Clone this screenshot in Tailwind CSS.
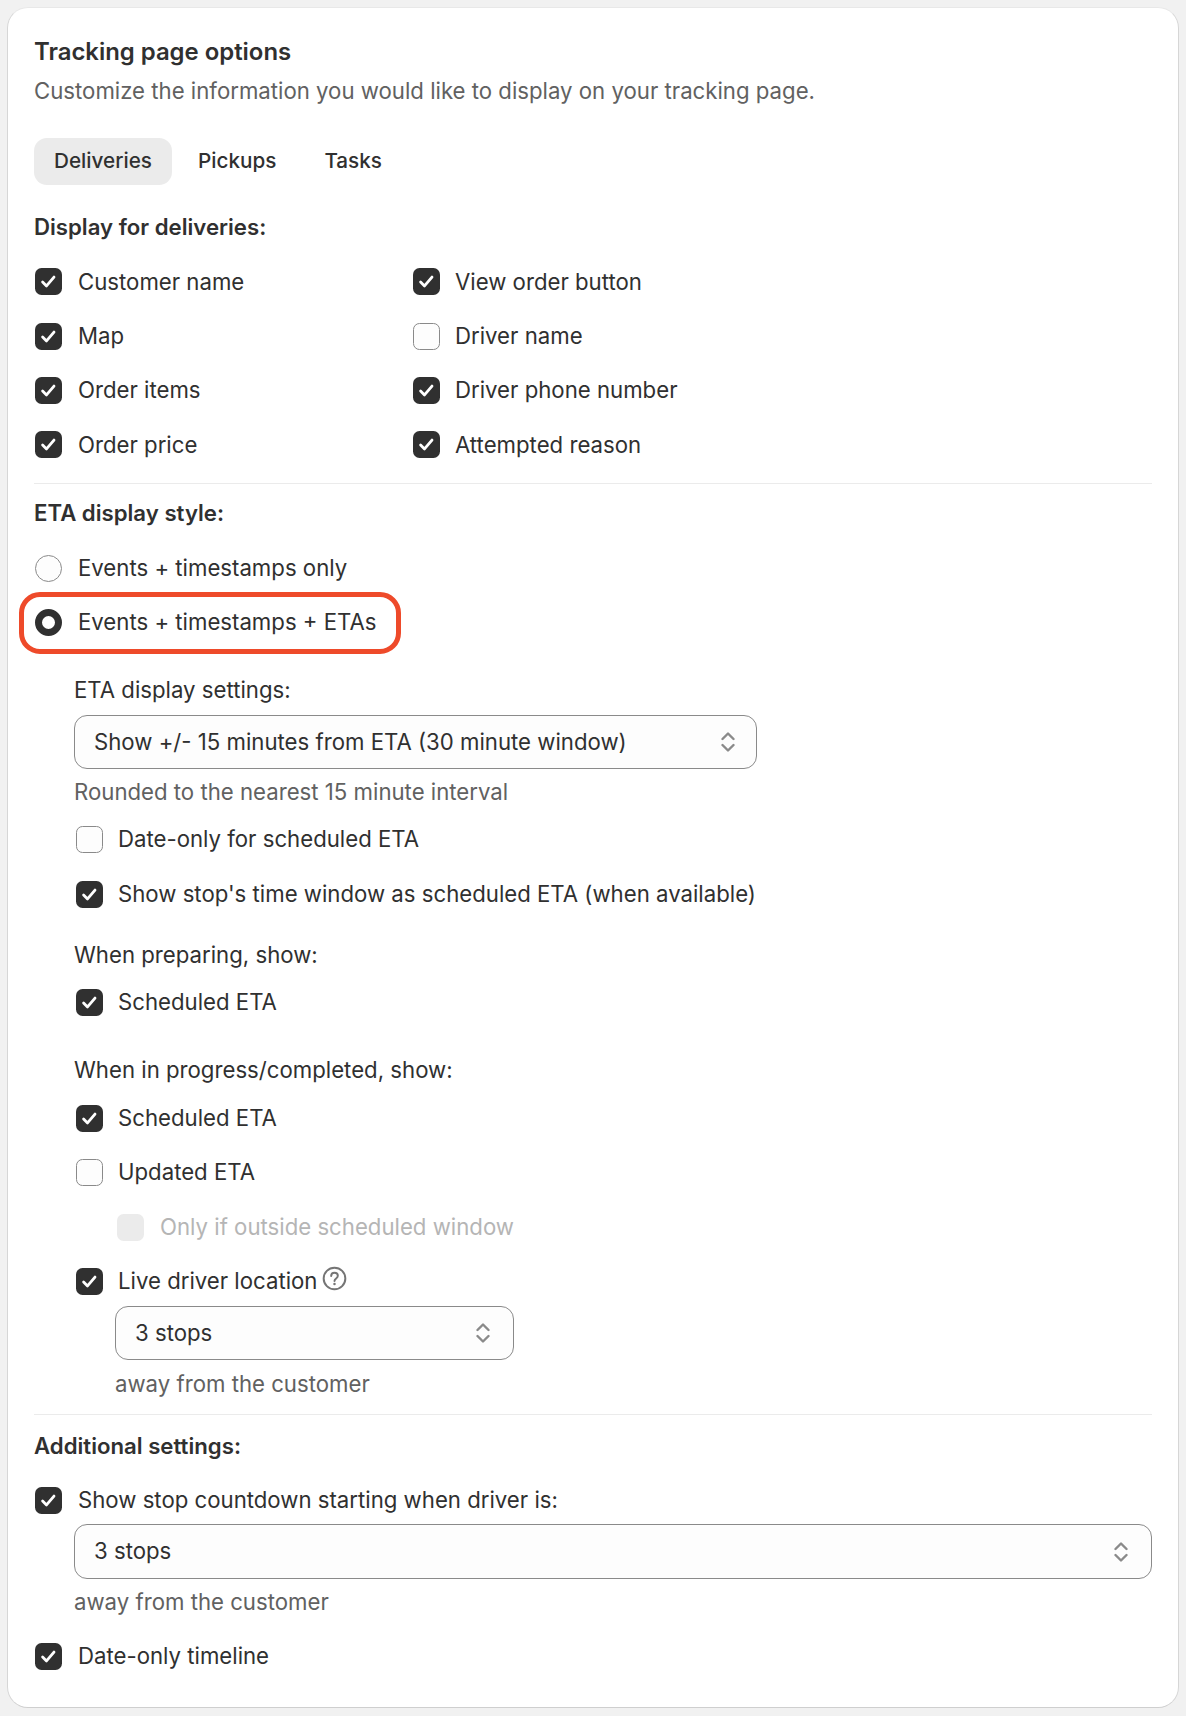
<!doctype html>
<html>
<head>
<meta charset="utf-8">
<script src="https://cdn.jsdelivr.net/npm/@tailwindcss/browser@4"></script>
</head>
<body class="bg-[#f1f1f1] font-[Inter,sans-serif] text-[#303030] text-[22.2px] leading-[36px]">
<svg class="hidden"><defs>
<symbol id="ck" viewBox="0 0 27 27"><rect width="27" height="27" rx="6.5" fill="#303030"/><path d="M7.6 14l3.9 3.9 7.5-8.8" fill="none" stroke="#fff" stroke-width="2.8" stroke-linecap="round" stroke-linejoin="round"/></symbol>
<symbol id="sel" viewBox="0 0 14 24"><path d="M1.5 9L7 3.5 12.5 9M1.5 15L7 20.5 12.5 15" fill="none" stroke="#8a8a8a" stroke-width="2.4" stroke-linecap="round" stroke-linejoin="round"/></symbol>
</defs></svg>
<div class="w-[1186px] h-[1716px] pt-[7px] pl-[7px]">
<main class="relative w-[1172px] h-[1701px] bg-white rounded-[21px] border border-x-[#d6d6d6] border-t-[#e8e8e8] border-b-[#cfcfcf] px-[26px] pt-[26px]">
  <h1 class="font-semibold text-[23.9px]">Tracking page options</h1>
  <p class="mt-[3px] text-[#616161]">Customize the information you would like to display on your tracking page.</p>
  <div class="mt-[29px] flex h-[47px] items-center font-medium text-[20.7px]">
    <span class="h-full w-[138px] rounded-[13px] bg-[#ebebeb] flex items-center justify-center pb-[1px]">Deliveries</span>
    <span class="ml-[26px] pb-[1px]">Pickups</span>
    <span class="ml-[48px] pb-[1px]">Tasks</span>
  </div>
  <h2 class="mt-[23.5px] font-semibold">Display for deliveries:</h2>
  <div class="mt-[10px] grid grid-cols-[379px_1fr] auto-rows-[54.4px] items-center">
    <label class="flex items-center gap-[16px] pl-px"><svg class="w-[27px] h-[27px]"><use href="#ck"/></svg>Customer name</label>
    <label class="flex items-center gap-[15px]"><svg class="w-[27px] h-[27px]"><use href="#ck"/></svg>View order button</label>
    <label class="flex items-center gap-[16px] pl-px"><svg class="w-[27px] h-[27px]"><use href="#ck"/></svg>Map</label>
    <label class="flex items-center gap-[15px]"><span class="w-[27px] h-[27px] rounded-[6.5px] border border-[#8a8a8a] bg-[#fdfdfd]"></span>Driver name</label>
    <label class="flex items-center gap-[16px] pl-px"><svg class="w-[27px] h-[27px]"><use href="#ck"/></svg>Order items</label>
    <label class="flex items-center gap-[15px]"><svg class="w-[27px] h-[27px]"><use href="#ck"/></svg>Driver phone number</label>
    <label class="flex items-center gap-[16px] pl-px"><svg class="w-[27px] h-[27px]"><use href="#ck"/></svg>Order price</label>
    <label class="flex items-center gap-[15px]"><svg class="w-[27px] h-[27px]"><use href="#ck"/></svg>Attempted reason</label>
  </div>
  <hr class="mt-[11.3px] border-[#ebebeb]">
  <h2 class="mt-[11px] font-semibold">ETA display style:</h2>
  <label class="mt-[10px] flex h-[54px] items-center gap-[16px] pl-px"><span class="w-[27px] h-[27px] rounded-full border border-[#8a8a8a] bg-[#fdfdfd]"></span>Events + timestamps only</label>
  <label class="flex h-[54px] items-center gap-[16px] pl-px"><span class="w-[27px] h-[27px] rounded-full border-[7.5px] border-[#303030] bg-white"></span>Events + timestamps + ETAs</label>
  <div class="absolute left-[11px] top-[584px] w-[382px] h-[62px] rounded-[21px] border-[5px] border-[#ee4a2a]"></div>

  <div class="pl-[40px]">
    <p class="mt-[23px]">ETA display settings:</p>
    <div class="mt-[7px] flex h-[54px] w-[683px] items-center justify-between rounded-[13px] border border-[#8a8a8a] bg-[#fdfdfd] pl-[19px] pr-[21px]"><span class="pb-px">Show +/- 15 minutes from ETA (30 minute window)</span><svg class="w-[14px] h-[24px]"><use href="#sel"/></svg></div>
    <p class="mt-[5px] text-[#616161]">Rounded to the nearest 15 minute interval</p>
    <label class="mt-[2px] flex h-[54px] items-center gap-[15px] pl-[2px]"><span class="w-[27px] h-[27px] rounded-[6.5px] border border-[#8a8a8a] bg-[#fdfdfd]"></span>Date-only for scheduled ETA</label>
    <label class="mt-px flex h-[54px] items-center gap-[15px] pl-[2px]"><svg class="w-[27px] h-[27px]"><use href="#ck"/></svg>Show stop's time window as scheduled ETA (when available)</label>
    <p class="mt-[16px]">When preparing, show:</p>
    <label class="mt-[2px] flex h-[54px] items-center gap-[15px] pl-[2px]"><svg class="w-[27px] h-[27px]"><use href="#ck"/></svg>Scheduled ETA</label>
    <p class="mt-[23px]">When in progress/completed, show:</p>
    <label class="mt-[3px] flex h-[54px] items-center gap-[15px] pl-[2px]"><svg class="w-[27px] h-[27px]"><use href="#ck"/></svg>Scheduled ETA</label>
    <label class="flex h-[54px] items-center gap-[15px] pl-[2px]"><span class="w-[27px] h-[27px] rounded-[6.5px] border border-[#8a8a8a] bg-[#fdfdfd]"></span>Updated ETA</label>
    <label class="mt-px flex h-[54px] items-center gap-[16px] pl-[43px] text-[#b5b5b5]"><span class="w-[27px] h-[27px] rounded-[6.5px] bg-[#ebebeb]"></span>Only if outside scheduled window</label>
    <label class="flex h-[54px] items-center gap-[15px] pl-[2px]"><svg class="w-[27px] h-[27px]"><use href="#ck"/></svg><span>Live driver location</span>
      <svg class="-ml-[10px] -mt-[5px] w-[25px] h-[25px]" viewBox="0 0 24 24" fill="none" stroke="#757575" stroke-width="1.9" stroke-linecap="round"><circle cx="12" cy="12" r="10.4"/><path d="M8.8 9.6c0-1.9 1.4-3.2 3.2-3.2s3.2 1.2 3.2 3c0 2.6-3.2 2.5-3.2 5"/><circle cx="12" cy="17.4" r="1.2" fill="#757575" stroke="none"/></svg>
    </label>
    <div class="ml-[41px] -mt-[2px] flex h-[54px] w-[399px] items-center justify-between rounded-[13px] border border-[#8a8a8a] bg-[#fdfdfd] pl-[19px] pr-[23px]"><span class="pb-px">3 stops</span><svg class="w-[14px] h-[24px]"><use href="#sel"/></svg></div>
    <p class="ml-[41px] mt-[6px] text-[#616161]">away from the customer</p>
  </div>
  <hr class="mt-[12px] border-[#ebebeb]">
  <h2 class="mt-[13px] font-semibold">Additional settings:</h2>
  <label class="mt-[9px] flex h-[54px] items-center gap-[16px] pl-px"><svg class="w-[27px] h-[27px]"><use href="#ck"/></svg>Show stop countdown starting when driver is:</label>
  <div class="ml-[40px] -mt-[3px] flex h-[55px] w-[1078px] items-center justify-between rounded-[13px] border border-[#8a8a8a] bg-[#fdfdfd] pl-[19px] pr-[23px]"><span class="pb-px">3 stops</span><svg class="w-[14px] h-[24px]"><use href="#sel"/></svg></div>
  <p class="ml-[40px] mt-[5px] text-[#616161]">away from the customer</p>
  <label class="mt-[9px] flex h-[54px] items-center gap-[16px] pl-px"><svg class="w-[27px] h-[27px]"><use href="#ck"/></svg>Date-only timeline</label>
</main>
</div>
</body>
</html>
